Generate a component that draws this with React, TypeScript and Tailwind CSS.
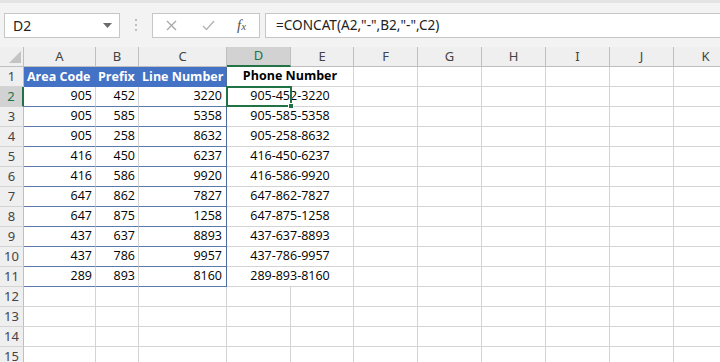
const cols = ["A", "B", "C", "D", "E", "F", "G", "H", "I", "J", "K"];

const data: [number, number, number][] = [
  [905, 452, 3220],
  [905, 585, 5358],
  [905, 258, 8632],
  [416, 450, 6237],
  [416, 586, 9920],
  [647, 862, 7827],
  [647, 875, 1258],
  [437, 637, 8893],
  [437, 786, 9957],
  [289, 893, 8160],
];

const cellFont = "font-['Open_Sans',sans-serif] text-[12.5px] text-black";
const headFont = "font-['Noto_Sans',sans-serif] text-[13px]";

function RowHead({ n, active }: { n: number; active?: boolean }) {
  return (
    <div
      className={
        "flex items-center justify-center border-b border-[#d4d4d4] " +
        headFont +
        (active
          ? " bg-[#d2d2d2] text-[#217346] border-r-2 border-r-[#217346]"
          : " bg-[#efefef] text-[#444] border-r border-r-[#bfbfbf]")
      }
    >
      {n}
    </div>
  );
}

function Blank() {
  return <div className="border-b border-r border-[#d4d4d4] bg-white" />;
}

function TableRow({ row, idx }: { row: [number, number, number]; idx: number }) {
  const [a, b, c] = row;
  const phone = `${a}-${b}-${c}`;
  return (
    <>
      <RowHead n={idx + 2} active={idx === 0} />
      <div className={"flex items-center justify-end pr-[3px] bg-white border-b border-b-[#5b79ab] border-r border-r-[#d4d4d4] " + cellFont}>{a}</div>
      <div className={"flex items-center justify-end pr-[3px] bg-white border-b border-b-[#5b79ab] border-r border-r-[#d4d4d4] " + cellFont}>{b}</div>
      <div className={"flex items-center justify-end pr-[4px] bg-white border-b border-b-[#5b79ab] border-r border-r-[#4e6c9f] " + cellFont}>{c}</div>
      <div className={"col-span-2 flex items-center justify-center bg-white border-b border-r border-[#d4d4d4] " + cellFont}>{phone}</div>
      {cols.slice(5).map((k) => (
        <Blank key={k} />
      ))}
    </>
  );
}

export default function App() {
  return (
    <div className="w-[720px] h-[362px] overflow-hidden bg-white">
      {/* formula bar */}
      <div className="h-[47px] bg-[#f3f3f3] border-t-[3px] border-[#e4e4e4] flex items-center gap-0">
        <div className="ml-[4px] w-[116px] h-[25px] bg-white border border-[#c6c6c6] flex items-center justify-between pl-[8px] pr-[7px]">
          <span className="font-['Noto_Sans',sans-serif] text-[14px] text-[#222]">D2</span>
          <svg width="9" height="5" viewBox="0 0 9 5">
            <path d="M0 0 L9 0 L4.5 5 Z" fill="#6b6b6b" />
          </svg>
        </div>
        <div className="w-[32px] flex flex-col items-center gap-[3px]">
          <span className="w-[2px] h-[2px] bg-[#bdbdbd]" />
          <span className="w-[2px] h-[2px] bg-[#bdbdbd]" />
          <span className="w-[2px] h-[2px] bg-[#bdbdbd]" />
        </div>
        <div className="w-[108px] h-[25px] bg-white border border-[#c6c6c6] flex items-center">
          <svg className="ml-[13px]" width="11" height="11" viewBox="0 0 11 11">
            <path d="M1 1 L10 10 M10 1 L1 10" stroke="#a8a8a8" strokeWidth="1.3" />
          </svg>
          <svg className="ml-[25px]" width="13" height="11" viewBox="0 0 13 11">
            <path d="M1 6 L4.5 9.5 L12 1" stroke="#b4b4b4" strokeWidth="1.4" fill="none" />
          </svg>
          <span className="ml-[22px] font-['Liberation_Serif',serif] italic text-[15px] text-[#555] leading-none">
            f<span className="text-[11px]">x</span>
          </span>
        </div>
        <div className="ml-[5px] flex-1 h-[25px] bg-white border border-r-0 border-[#c6c6c6] flex items-center pl-[10px]">
          <span className="font-['Noto_Sans',sans-serif] text-[13.6px] text-[#222]">=CONCAT(A2,"-",B2,"-",C2)</span>
        </div>
      </div>

      {/* grid */}
      <div className="relative grid grid-cols-[24px_72px_43px_88px_64px_63px_64px_64px_64px_64px_64px_64px] auto-rows-[20px] w-[738px]">
        {/* column headers */}
        <div className="bg-[#efefef] border-b border-r border-[#bfbfbf] flex items-end justify-end pr-[2px] pb-[3px]">
          <svg width="12" height="12" viewBox="0 0 12 12">
            <path d="M12 0 L12 12 L0 12 Z" fill="#c4c4c4" />
          </svg>
        </div>
        {cols.map((c) =>
          c === "D" ? (
            <div key={c} className={"bg-[#d2d2d2] text-[#217346] border-b-2 border-b-[#217346] border-r border-r-[#bfbfbf] flex items-center justify-center " + headFont}>
              {c}
            </div>
          ) : (
            <div key={c} className={"bg-[#efefef] text-[#444] border-b border-r border-[#bfbfbf] flex items-center justify-center " + headFont}>
              {c}
            </div>
          )
        )}

        {/* row 1 */}
        <RowHead n={1} />
        <div className="bg-[#4472c4] flex items-center pl-[3px] font-['Open_Sans',sans-serif] text-[12.5px] font-bold text-white">Area Code</div>
        <div className="bg-[#4472c4] flex items-center pl-[2px] font-['Open_Sans',sans-serif] text-[12.5px] font-bold text-white">Prefix</div>
        <div className="bg-[#4472c4] border-r border-r-[#4e6c9f] flex items-center pl-[3px] font-['Open_Sans',sans-serif] text-[12.5px] font-bold text-white">Line Number</div>
        <div className="col-span-2 bg-white border-b border-r border-[#d4d4d4] flex items-center justify-center font-['Open_Sans',sans-serif] text-[12.5px] font-bold text-black">
          Phone Number
        </div>
        {cols.slice(5).map((k) => (
          <Blank key={k} />
        ))}

        {data.map((r, i) => (
          <TableRow key={i} row={r} idx={i} />
        ))}

        {[12, 13, 14, 15].map((n) => (
          <div key={n} className="contents">
            <RowHead n={n} />
            {cols.map((k) => (
              <Blank key={k} />
            ))}
          </div>
        ))}

        {/* active cell selection */}
        <div className="absolute left-[226px] top-[39px] w-[66px] h-[21px] border-2 border-[#217346]" />
        <div className="absolute left-[288px] top-[56px] w-[6px] h-[6px] bg-[#217346] border border-white" />
      </div>
    </div>
  );
}
